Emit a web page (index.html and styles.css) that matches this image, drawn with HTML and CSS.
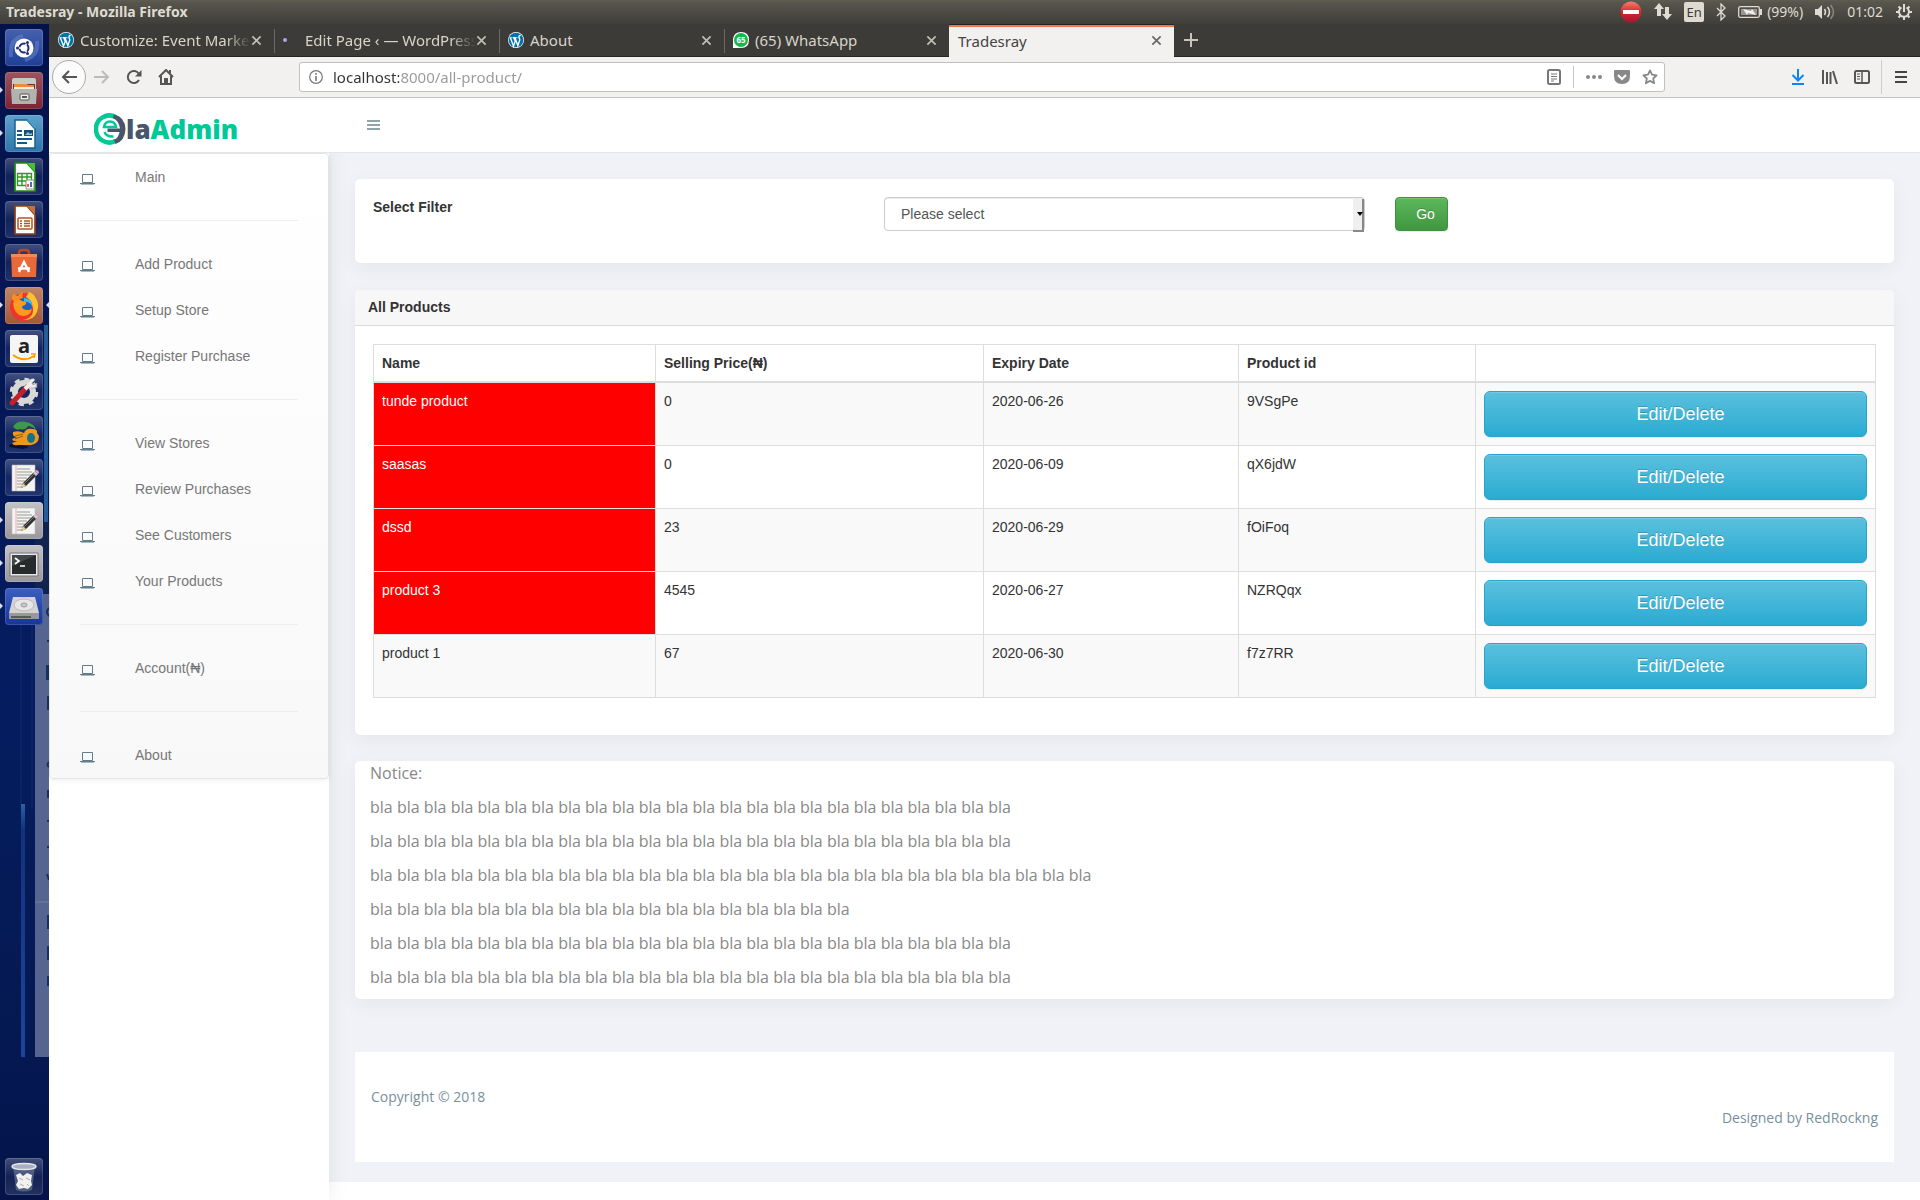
FILE: index.html
```html
<!DOCTYPE html>
<html lang="en">
<head>
<meta charset="utf-8">
<title>Tradesray</title>
<meta name="viewport" content="width=device-width, initial-scale=1">
<link rel="stylesheet" href="styles.css">
</head>
<body>
<svg class="sprite" aria-hidden="true">
  <symbol id="close" viewBox="0 0 12 12"><path d="M1.500 1.500l9 9M10.500 1.500l-9 9" fill="none" stroke="currentColor" stroke-width="1.800"/></symbol>
  <symbol id="wp" viewBox="0 0 24 24"><circle cx="12" cy="12" r="12" fill="#fff"/><circle cx="12" cy="12" r="11" fill="#0073aa"/><path d="M3.500 8.500L8.300 21l2.600-7.200L8.600 8.500M7.500 8.500h4M10.500 8.500L14.800 20.500l2.800-8.500c.4-2-1.600-3-1.200-5 .2-1.400 1.500-2 2.500-1.600" fill="none" stroke="#fff" stroke-width="2"/><path d="M2.500 8.500h4.500M9.500 8.500h5" stroke="#fff" stroke-width="1.200"/></symbol>
  <symbol id="laptop" viewBox="0 0 15 11"><path d="M2.500 .5h10v8h-10z" fill="none" stroke="#607d8b"/><path d="M0 9h15v1H0z" fill="#607d8b"/><path d="M1 10h13v1H1z" fill="#a9bac3"/></symbol>
  <symbol id="gedit" viewBox="0 0 30 30"><path d="M3 2h23v26H3z" fill="#f4f4f2" stroke="#bbb" stroke-width=".6"/><path d="M7 2v26" stroke="#e99" stroke-width=".8"/><path d="M8 6h13M8 9h15M8 12h14M8 15h10M8 18h8M8 21h6M8 24h6" stroke="#999" stroke-width="1"/><path d="M12 25l2-5L25 9l3 3-11 11z" fill="#333"/><path d="M12 25l2-5 3 3z" fill="#e8cf8a"/><path d="M15 21L26 10" stroke="#777" stroke-width="1"/><path d="M24 10l2-2 3 3-2 2z" fill="#ccc"/><path d="M26 8l1-1q3 0 3 3l-1 1z" fill="#e29ad0"/></symbol>
</svg>

<header class="panel">
  <span class="panel-title">Tradesray - Mozilla Firefox</span>
  <div class="tray">
    <svg width="22" height="22" viewBox="0 0 22 22"><defs><linearGradient id="stop" x2="0" y2="1"><stop offset="0" stop-color="#f0806a"/><stop offset=".5" stop-color="#d8262c"/><stop offset="1" stop-color="#a31636"/></linearGradient></defs><circle cx="11" cy="11" r="10.500" fill="url(#stop)"/><path d="M3 9h16v4H3z" fill="#fff"/></svg>
    <svg width="18" height="18" viewBox="0 0 18 18" fill="#dfdbd2"><path d="M5 0l5 6H7v7H3V6H0zM13 17l-5-6h3V4h4v7h3z"/></svg>
    <span class="lang">En</span>
    <svg width="10" height="18" viewBox="0 0 10 18"><path d="M1 5l8 8-4 4V1l4 4-8 8" fill="none" stroke="#dfdbd2" stroke-width="1.300"/></svg>
    <span class="battery"><svg width="24" height="14" viewBox="0 0 24 14"><rect x=".7" y="1.700" width="20.600" height="10.600" rx="1.500" fill="none" stroke="#dfdbd2" stroke-width="1.300"/><path d="M3 4h16v6H3z" fill="#98968f"/><path d="M22 4h2v6h-2z" fill="#dfdbd2"/><path d="M5 4l8 2 1-2 4 6-8-2-1 2z" fill="#eee"/></svg>(99%)</span>
    <svg width="20" height="18" viewBox="0 0 20 18"><path d="M0 6h3l4-4v14l-4-4H0z" fill="#dfdbd2"/><path d="M9.500 6q2 3 0 6M12.500 4q4 5 0 10" fill="none" stroke="#dfdbd2" stroke-width="1.500"/><path d="M15.500 2q6 7 0 14" fill="none" stroke="#8a8780" stroke-width="1.500"/></svg>
    <span>01:02</span>
    <svg width="18" height="18" viewBox="0 0 18 18" fill="none" stroke="#dfdbd2"><path d="M6.500 4.500a5 5 0 1 0 5 0" stroke-width="2"/><path d="M9 1v8" stroke-width="2"/><path d="M3.500 3.500l2 2M14.500 3.500l-2 2M1 9h3M17 9h-3M3.500 14.500l2-2M14.500 14.500l-2-2M9 17v-3" stroke-width="2"/></svg>
  </div>
</header>

<div class="desktop">
<nav class="launcher" aria-label="Launcher">
  <svg class="wallpaper" width="49" height="1176" viewBox="0 0 49 1176" aria-hidden="true">
    <defs><linearGradient id="streak" x2="0" y2="1"><stop offset="0" stop-color="#2a63a8"/><stop offset=".1" stop-color="#12327c"/><stop offset="1" stop-color="#1a46a0"/></linearGradient></defs>
    <path d="M44 301h4v197h-4z" fill="#265d98"/><path d="M35 498h14v72H35z" fill="#13234f"/>
    <path d="M35 570h14v463H35z" fill="#55658f"/><path d="M35 878h14" stroke="#7080a5"/>
    <path d="M21 780h4v253h-4z" fill="url(#streak)"/><path d="M21 600v180M32 600v185" stroke="#0d2c6c"/>
    <path d="M49 584q-4 4 0 8M47 617h2M47 642h2v13h-2zM48 672v14M49 738q-3 3 0 5M48 766v8M47 797h2M47 823h2M47 850l2 6M48 891v14M48 922v14M48 952v10" fill="none" stroke="#18305f" stroke-width="2"/>
  </svg>
  <button class="tile tile-dash" aria-label="Dash"><svg viewBox="0 0 30 30"><path d="M2 24Q0 6 14 3M28 8q2 14-12 19" fill="none" stroke="#5f7fc4" stroke-width="4" opacity=".6"/><circle cx="15" cy="15" r="9.500" fill="#fff"/><circle cx="15" cy="15" r="4.500" fill="none" stroke="#1f2f73" stroke-width="2"/><path d="M15 15L8 15M15 15l4-7M15 15l4 7" stroke="#fff" stroke-width="1.500"/><circle cx="15" cy="15" r="3" fill="#fff"/><circle cx="8.500" cy="15" r="1.500" fill="#1f2f73"/><circle cx="18.500" cy="9.500" r="1.500" fill="#1f2f73"/><circle cx="18.500" cy="20.500" r="1.500" fill="#1f2f73"/></svg></button>
  <button class="tile tile-files running" aria-label="Files"><svg viewBox="0 0 30 30"><path d="M3 4q0-2 2-2h20q2 0 2 2v24H3z" fill="#c9c9c5"/><path d="M4 8h22v5H4z" fill="#5a3a2a"/><path d="M5 8h13l1 1h6v4H5z" fill="#f08a3a"/><path d="M5 11h20v2H5z" fill="#fff0d8"/><path d="M2 13h26l-1 15H3z" fill="#b2b2ae"/><rect x="11" y="18" width="9" height="6" rx="1" fill="#eee" stroke="#555"/><path d="M13 20h5v2h-5z" fill="#555"/></svg></button>
  <button class="tile tile-writer running" aria-label="Writer"><svg viewBox="0 0 30 30"><path d="M6 1h12l8 9v19H6z" fill="#fff" stroke="#17608f" stroke-width="1.500"/><path d="M18 1h8v9z" fill="#4b9cc8"/><path d="M8 12h5M8 16h5M8 20h15M8 24h10" stroke="#125a8a" stroke-width="2"/><path d="M15 11h9v6h-9z" fill="#174f7a"/><path d="M16 16l3-3 2 2 2-1v2z" fill="#8cc"/></svg></button>
  <button class="tile" aria-label="Calc"><svg viewBox="0 0 30 30"><path d="M6 1h12l8 9v19H6z" fill="#fff" stroke="#1e8a10" stroke-width="1.700"/><path d="M18 1h8v9z" fill="#43c330"/><path d="M8.500 11.500h14v12h-14zM8 15h15M8 19h15M13 11v13M18 11v13" fill="none" stroke="#2d9a1d" stroke-width="1.400"/><path d="M17 18h8v9h-8z" fill="#fff" stroke="#888"/><path d="M19 25v-3" stroke="#e63" stroke-width="2"/><path d="M22 25v-5" stroke="#37b" stroke-width="2"/></svg></button>
  <button class="tile" aria-label="Impress"><svg viewBox="0 0 30 30"><path d="M6 1h12l8 9v19H6z" fill="#fff" stroke="#8f3f14" stroke-width="1.700"/><path d="M18 1h8v9z" fill="#c8703a"/><rect x="9" y="13" width="14" height="11" rx="1" fill="#fff" stroke="#b4541c" stroke-width="1.500"/><path d="M11 16h2M15 16h6M11 18.500h2M15 18.500h6M11 21h2M15 21h6" stroke="#b4541c" stroke-width="1.500"/></svg></button>
  <button class="tile" aria-label="Ubuntu Software"><svg viewBox="0 0 30 30"><path d="M10 9V5q0-3 3-3h4q3 0 3 3v4" fill="none" stroke="#b8482a" stroke-width="2.500"/><path d="M2 6h26l-1 23H3z" fill="#e96a38"/><path d="M2 6h26v3H2z" fill="#f58a50"/><path d="M10 24l5-10 5 10M9 20.500h12" fill="none" stroke="#fff" stroke-width="2.500"/></svg></button>
  <button class="tile tile-firefox running active" aria-label="Firefox"><svg viewBox="0 0 30 30"><circle cx="15" cy="16" r="14" fill="#f0342c"/><path d="M26 6q5 6 2 15-4 9-14 8 11-2 10-12Q23 9 17 6L20 1q5 2 6 5z" fill="#ffc22e"/><path d="M3 8q0-4 2-6 1 3 4 3 2-4 5-4-1 6 0 7l-8 4z" fill="#ff8a1e"/><circle cx="15" cy="15" r="8" fill="#2263b8"/><path d="M15 7q8 0 8 8-3-5-8-4z" fill="#37bdf0"/><path d="M4 12q5-6 9-2l4 1q1 3-4 4 0 4 5 4 4 0 5-2-1 8-9 8-9-1-10-13z" fill="#ff9a1f"/></svg></button>
  <button class="tile" aria-label="Amazon"><svg viewBox="0 0 30 30"><rect x="1" y="1" width="28" height="28" rx="2" fill="#f5f5f5"/><path d="M4 21q11 8 21 1" fill="none" stroke="#f90" stroke-width="2"/><path d="M22 20l4 0-1 4" fill="none" stroke="#f90" stroke-width="1.500"/><text x="15" y="19" text-anchor="middle" class="amazon">a</text></svg></button>
  <button class="tile" aria-label="System Settings"><svg viewBox="0 0 30 30"><circle cx="15" cy="15" r="9" fill="none" stroke="#d8d8d5" stroke-width="6"/><circle cx="15" cy="15" r="12.500" fill="none" stroke="#d8d8d5" stroke-width="3.500" stroke-dasharray="5 4.820"/><path d="M3 26L18 10" stroke="#c4202a" stroke-width="5" stroke-linecap="round"/><path d="M16 12l6-6" stroke="#eee" stroke-width="4"/><path d="M20 3q5-3 6 0l-3 3 1 2 4-2q0 6-6 5" fill="#eee" stroke="#888" stroke-width=".6"/></svg></button>
  <button class="tile" aria-label="Media"><svg viewBox="0 0 30 30"><path d="M0 27q0-5 8-3l12 3-6 2z" fill="#071235"/><path d="M4 7Q8 0 17 2q8 1 10 8-4-4-8-4-3 5-8 3-3 2-7-2z" fill="#3d9b45"/><path d="M4 12q6-2 11 1 2-5 8-4 6 0 5 4l2 3q0 8-8 9H9q-5 1-6-2l6-2q-5 1-6-2l5-2q-5 0-4-5z" fill="#ed981f"/><path d="M6 16l8-2M6 19l8-3" stroke="#9a5a10"/><ellipse cx="22" cy="18" rx="4" ry="5" fill="#197281"/></svg></button>
  <button class="tile" aria-label="Text Editor"><svg><use href="#gedit"/></svg></button>
  <button class="tile tile-grey running" aria-label="Text Editor"><svg><use href="#gedit"/></svg></button>
  <button class="tile tile-grey running" aria-label="Terminal"><svg viewBox="0 0 30 30"><path d="M1 4h28v23H1z" fill="#e8e8e8" stroke="#777"/><path d="M3 6h24v19H3z" fill="#272b2b"/><path d="M3 6h24L3 17z" fill="#41474a"/><path d="M6 9l4 3-4 3M11 17h5" fill="none" stroke="#fff" stroke-width="1.700"/></svg></button>
  <button class="tile tile-disk running" aria-label="Disk"><svg viewBox="0 0 30 30"><path d="M4 5h22l4 16H0z" fill="#d4d4d4"/><path d="M0 21h30v6H0z" fill="#999"/><ellipse cx="15" cy="13" rx="10" ry="6" fill="#e6e6e6" stroke="#bbb"/><ellipse cx="15" cy="13" rx="3" ry="2" fill="#ccc" stroke="#999"/><path d="M2 25h20" stroke="#444" stroke-width="1.500"/></svg></button>
  <button class="tile tile-trash" aria-label="Trash"><svg viewBox="0 0 30 30"><path d="M4 4h22l-3 24q-8 3-16 0z" fill="#8d96ae" opacity=".45"/><ellipse cx="15" cy="4.500" rx="12" ry="3" fill="#a8afc0" stroke="#e4e6ea" stroke-width="1.500"/><path d="M7 13l4-2 3 3 4-3 5 2-1 6 1 4-4 4-4-1-5 1-3-4 2-4z" fill="#f1f1ef"/><path d="M10 16l4 2M17 16l4 2M11 22l4 2M18 22l2 2" stroke="#aaa"/></svg></button>
</nav>

<div class="browser">
  <div class="tabs">
    <button class="tab"><svg class="favicon"><use href="#wp"/></svg><span class="tab-label fade">Customize: Event Marke</span><svg class="tab-close"><use href="#close"/></svg></button>
    <button class="tab"><span class="favicon loading"></span><span class="tab-label fade">Edit Page ‹ — WordPress</span><svg class="tab-close"><use href="#close"/></svg></button>
    <button class="tab"><svg class="favicon"><use href="#wp"/></svg><span class="tab-label">About</span><svg class="tab-close"><use href="#close"/></svg></button>
    <button class="tab"><svg class="favicon" viewBox="0 0 16 16"><path d="M0 16V7Q1 0 8 0q8 0 8 8t-8 8z" fill="#fff"/><circle cx="8" cy="8" r="7" fill="#16b84e"/><text x="8" y="11" text-anchor="middle" class="badge">65</text></svg><span class="tab-label">(65) WhatsApp</span><svg class="tab-close"><use href="#close"/></svg></button>
    <button class="tab tab-active"><span class="tab-label">Tradesray</span><svg class="tab-close"><use href="#close"/></svg></button>
    <button class="new-tab" aria-label="New tab"><svg width="14" height="14" viewBox="0 0 14 14"><path d="M7 0v14M0 7h14" stroke="#c9c5bb" stroke-width="2"/></svg></button>
  </div>
  <div class="toolbar">
    <div class="nav-buttons">
      <button class="back" aria-label="Back"><svg width="16" height="14" viewBox="0 0 16 14"><path d="M16 7H2M8 1L2 7l6 6" fill="none" stroke="#555" stroke-width="2"/></svg></button>
      <button aria-label="Forward"><svg width="16" height="14" viewBox="0 0 16 14"><path d="M0 7h14M8 1l6 6-6 6" fill="none" stroke="#bbb" stroke-width="2"/></svg></button>
      <button aria-label="Reload"><svg width="16" height="16" viewBox="0 0 16 16"><path d="M13 11a6 6 0 1 1 0-6" fill="none" stroke="#555" stroke-width="2"/><path d="M15.500 1v6.500H9z" fill="#555"/></svg></button>
      <button aria-label="Home"><svg width="16" height="16" viewBox="0 0 16 16"><path d="M1 8l7-7 7 7M3 7v8h10V7M12 4V1" fill="none" stroke="#555" stroke-width="2"/><path d="M6 9h4v6H6z" fill="#555"/></svg></button>
    </div>
    <div class="urlbar">
      <svg width="14" height="14" viewBox="0 0 14 14"><circle cx="7" cy="7" r="6.300" fill="none" stroke="#777" stroke-width="1.200"/><path d="M7 6v5M7 3v1.700" stroke="#777" stroke-width="1.600"/></svg>
      <input class="url" type="text" aria-label="Address" value="localhost:8000/all-product/">
      <svg width="14" height="16" viewBox="0 0 14 16"><rect x="1" y="1" width="12" height="14" rx="1.500" fill="none" stroke="#777" stroke-width="2"/><path d="M4 5h6M4 7.500h6M4 10h6M4 12h3" stroke="#777"/></svg>
      <span class="url-sep"></span>
      <svg width="16" height="16" viewBox="0 0 16 16" fill="#888"><circle cx="2" cy="8" r="2"/><circle cx="8" cy="8" r="2"/><circle cx="14" cy="8" r="2"/></svg>
      <svg width="16" height="14" viewBox="0 0 16 14"><path d="M1 0h14q1 0 1 1v5q0 8-8 8T0 6V1q0-1 1-1z" fill="#888"/><path d="M4 5l4 4 4-4" fill="none" stroke="#fff" stroke-width="2"/></svg>
      <svg width="16" height="16" viewBox="0 0 16 16"><path d="M8 1.500l2 4.200 4.600.6-3.400 3.200.9 4.700L8 11.900l-4.100 2.300.9-4.700L1.400 6.300 6 5.700z" fill="none" stroke="#888" stroke-width="1.800" stroke-linejoin="round"/></svg>
    </div>
    <div class="tool-buttons">
      <button aria-label="Downloads"><svg width="14" height="16" viewBox="0 0 14 16"><path d="M7 0v11M1.500 6L7 11.500 12.500 6M1 15h12" fill="none" stroke="#0a84ff" stroke-width="2"/></svg></button>
      <button aria-label="Library"><svg width="16" height="14" viewBox="0 0 16 14"><path d="M1 0v14M5 2v12M8.500 2v12M11 1l4 13" fill="none" stroke="#555" stroke-width="2"/></svg></button>
      <button aria-label="Sidebars"><svg width="16" height="14" viewBox="0 0 16 14"><rect x="1" y="1" width="14" height="12" rx="1.500" fill="none" stroke="#555" stroke-width="2"/><path d="M8 1v12" stroke="#555" stroke-width="1.500"/><path d="M3 4h3M3 6.500h3M3 9h3" stroke="#555"/></svg></button>
      <button class="menu" aria-label="Menu"><svg width="12" height="12" viewBox="0 0 12 12"><path d="M0 1h12M0 6h12M0 11h12" stroke="#444" stroke-width="2"/></svg></button>
    </div>
  </div>

  <div class="site">
    <header class="site-header">
      <a class="logo" href="#"><svg width="32" height="32" viewBox="0 0 32 32"><path d="M22 4.200A13.500 13.500 0 1 0 22 27.800" fill="none" stroke="#00c896" stroke-width="4.500"/><path d="M20 1.500Q31 4 31.500 16 31 28 21.500 31L20 27Q25 24 25.500 19H13.500v-3.500H26Q25 8 19 5z" fill="#47566b"/><path d="M22 14H10q1-5.500 6-5.500T22 14zM10.500 19q2 5 9 4.500" fill="none" stroke="#00c896" stroke-width="2.500"/></svg><span>la<b>Admin</b></span></a>
      <button class="burger" aria-label="Toggle menu"><svg width="13" height="10" viewBox="0 0 13 10"><path d="M0 1h13M0 5h13M0 9h13" stroke="#90a4ae" stroke-width="2"/></svg></button>
    </header>
    <div class="site-body">
      <aside class="sidebar">
        <nav class="side-menu">
          <a href="#"><svg><use href="#laptop"/></svg>Main</a>
          <hr>
          <a href="#"><svg><use href="#laptop"/></svg>Add Product</a>
          <a href="#"><svg><use href="#laptop"/></svg>Setup Store</a>
          <a href="#"><svg><use href="#laptop"/></svg>Register Purchase</a>
          <hr>
          <a href="#"><svg><use href="#laptop"/></svg>View Stores</a>
          <a href="#"><svg><use href="#laptop"/></svg>Review Purchases</a>
          <a href="#"><svg><use href="#laptop"/></svg>See Customers</a>
          <a href="#"><svg><use href="#laptop"/></svg>Your Products</a>
          <hr>
          <a href="#"><svg><use href="#laptop"/></svg>Account(₦)</a>
          <hr>
          <a href="#"><svg><use href="#laptop"/></svg>About</a>
        </nav>
      </aside>
      <main class="content">
        <form class="card filter">
          <label for="filter">Select Filter</label>
          <div class="select"><select id="filter"><option>Please select</option></select></div>
          <div><button class="btn btn-go" type="button">Go</button></div>
        </form>

        <section class="card">
          <h2 class="card-header">All Products</h2>
          <div class="card-body">
            <table class="products">
              <colgroup><col class="c-name"><col class="c-price"><col class="c-date"><col class="c-id"><col></colgroup>
              <thead><tr><th>Name</th><th>Selling Price(₦)</th><th>Expiry Date</th><th>Product id</th><th></th></tr></thead>
              <tbody>
                <tr><td class="expired">tunde product</td><td>0</td><td>2020-06-26</td><td>9VSgPe</td><td><button class="btn btn-edit">Edit/Delete</button></td></tr>
                <tr><td class="expired">saasas</td><td>0</td><td>2020-06-09</td><td>qX6jdW</td><td><button class="btn btn-edit">Edit/Delete</button></td></tr>
                <tr><td class="expired">dssd</td><td>23</td><td>2020-06-29</td><td>fOiFoq</td><td><button class="btn btn-edit">Edit/Delete</button></td></tr>
                <tr><td class="expired">product 3</td><td>4545</td><td>2020-06-27</td><td>NZRQqx</td><td><button class="btn btn-edit">Edit/Delete</button></td></tr>
                <tr><td>product 1</td><td>67</td><td>2020-06-30</td><td>f7z7RR</td><td><button class="btn btn-edit">Edit/Delete</button></td></tr>
              </tbody>
            </table>
          </div>
        </section>

        <section class="card notice">
          <p>Notice:</p>
          <p>bla bla bla bla bla bla bla bla bla bla bla bla bla bla bla bla bla bla bla bla bla bla bla bla</p>
          <p>bla bla bla bla bla bla bla bla bla bla bla bla bla bla bla bla bla bla bla bla bla bla bla bla</p>
          <p>bla bla bla bla bla bla bla bla bla bla bla bla bla bla bla bla bla bla bla bla bla bla bla bla bla bla bla</p>
          <p>bla bla bla bla bla bla bla bla bla bla bla bla bla bla bla bla bla bla</p>
          <p>bla bla bla bla bla bla bla bla bla bla bla bla bla bla bla bla bla bla bla bla bla bla bla bla</p>
          <p>bla bla bla bla bla bla bla bla bla bla bla bla bla bla bla bla bla bla bla bla bla bla bla bla</p>
        </section>

        <footer class="site-footer">
          <div>Copyright © 2018</div>
          <div class="credit">Designed by RedRockng</div>
        </footer>
      </main>
    </div>
  </div>
</div>
</div>
</body>
</html>
```
FILE: styles.css
```css
* { box-sizing: border-box; }
body {
  margin: 0;
  min-height: 100vh;
  display: flex;
  flex-direction: column;
  font: 14px/20px "Liberation Sans", Arial, sans-serif;
  color: #333;
  background: #fff;
}
button, input, select { font: inherit; color: inherit; margin: 0; }
button { border: 0; padding: 0; background: none; }
svg { display: block; flex: none; }
a { text-decoration: none; color: inherit; }
.sprite { position: absolute; width: 0; height: 0; }

/* Desktop panel */
.panel {
  height: 24px;
  display: flex;
  align-items: center;
  justify-content: space-between;
  padding: 0 6px;
  background: linear-gradient(#5f5d52, #57554c 12%, #3f3e39);
  color: #dfdbd2;
  font: 14px/24px "Noto Sans", "Open Sans", sans-serif;
}
.panel-title { font-weight: bold; }
.tray { display: flex; align-items: center; gap: 12px; padding-right: 1px; }
.lang { width: 20px; height: 20px; border-radius: 2px; background: #dfdbd2; color: #3c3b37; font-size: 13px; line-height: 20px; text-align: center; }
.battery { display: flex; align-items: center; gap: 5px; }

.desktop { flex: 1; display: flex; }

/* Launcher */
.launcher {
  position: relative;
  flex: none;
  width: 49px;
  padding: 5px;
  display: flex;
  flex-direction: column;
  gap: 6px;
  overflow: hidden;
  background: linear-gradient(#03124a, #04195a 40%, #051d60 55%, #051a55 80%, #04144a);
}
.wallpaper { position: absolute; left: 0; top: 0; }
.tile {
  position: relative;
  width: 38px;
  height: 37px;
  display: grid;
  place-items: center;
  border-radius: 4px;
  background: linear-gradient(rgba(255,255,255,.25), rgba(255,255,255,.06) 50%, rgba(255,255,255,.12));
  box-shadow: inset 0 0 0 1px rgba(255,255,255,.15);
}
.tile svg { width: 30px; height: 30px; overflow: visible; }
.tile-dash { background: linear-gradient(#4560ad, #1f3f97); }
.tile-files { background: linear-gradient(#9a5560, #7a2436); }
.tile-writer { background: linear-gradient(#5fa0cc, #2e76ab); }
.tile-firefox { background: linear-gradient(#c08566, #a4583a); }
.tile-grey { background: linear-gradient(#c4c2c4, #9a989c); }
.tile-disk { background: linear-gradient(#3c5fc0, #16369a); }
.tile-trash { margin-top: auto; }
.running::before, .active::after {
  content: "";
  position: absolute;
  top: 15px;
  border: 3px solid transparent;
}
.running::before { left: -5px; border-left-color: #dde; border-right: 0; }
.active::after { right: -6px; border-right-color: #dde; border-left: 0; }
.amazon { font: bold 20px "Open Sans", sans-serif; fill: #222; }

/* Browser chrome */
.browser { flex: 1; min-width: 0; display: flex; flex-direction: column; font-family: "Noto Sans", "Open Sans", sans-serif; }
.tabs { height: 33px; display: flex; background: #3c3b37; border-bottom: 1px solid #252422; }
.tab {
  position: relative;
  width: 225px;
  display: flex;
  align-items: center;
  gap: 6px;
  padding: 0 12px 0 9px;
  color: #d8d4ca;
  font-size: 15px;
  text-align: left;
}
.tab + .tab::before { content: ""; position: absolute; left: 0; top: 5px; width: 1px; height: 24px; background: #6a6963; }
.favicon { width: 16px; height: 16px; }
.loading { flex: none; display: grid; align-items: center; }
.loading::before { content: ""; width: 4px; height: 4px; border-radius: 50%; background: #a9a4f0; }
.tab-label { flex: 1; min-width: 0; white-space: nowrap; }
.fade { margin-right: -6px; -webkit-mask-image: linear-gradient(90deg, #000 85%, transparent); mask-image: linear-gradient(90deg, #000 85%, transparent); }
.tab-close { width: 11px; height: 11px; color: #c3bfb5; }
.tab-active { height: 33px; background: #f2f1f0; box-shadow: inset 0 1px #252422, inset 0 3px #f07746; color: #444; }
.tab + .tab-active::before { display: none; }
.tab-active .tab-close { color: #666; }
.new-tab { width: 33px; display: grid; place-items: center; }
.badge { font: bold 8px "Noto Sans", sans-serif; fill: #fff; }

.toolbar {
  height: 41px;
  display: flex;
  align-items: center;
  background: #f2f1f0;
  border-bottom: 1px solid #c4c2c0;
}
.toolbar button { width: 32px; height: 34px; display: grid; place-items: center; }
.nav-buttons { width: 250px; display: flex; padding-left: 3px; }
.toolbar .back { width: 34px; border: 1px solid #aaa; border-radius: 50%; background: #fbfbfb; }
.urlbar {
  flex: 1;
  height: 30px;
  display: flex;
  align-items: center;
  gap: 12px;
  padding: 0 6px 0 9px;
  background: #fff;
  border: 1px solid #c2c0bd;
  border-radius: 3px;
}
.url {
  flex: 1;
  min-width: 0;
  height: 28px;
  border: 0;
  outline: 0;
  padding: 0;
  margin-left: -2px;
  font-size: 15px;
  background: linear-gradient(90deg, #333 66px, #999 66px);
  -webkit-background-clip: text;
  background-clip: text;
  -webkit-text-fill-color: transparent;
}
.url-sep { width: 1px; height: 22px; background: #c8c8c8; }
.tool-buttons { width: 255px; display: flex; justify-content: flex-end; }
.toolbar .menu { width: 39px; margin-left: 3px; border-left: 1px solid #cfcdca; }

/* Site */
.site { flex: 1; display: flex; flex-direction: column; font-family: "Liberation Sans", Arial, sans-serif; }
.site-header { height: 55px; display: flex; align-items: center; border-bottom: 1px solid #e6e6ea; }
.logo { width: 318px; display: flex; align-items: center; padding: 7px 0 0 45px; color: #47566b; font: 800 26px/32px "Open Sans", sans-serif; }
.logo b { color: #00c896; font-weight: 800; }
.site-body { flex: 1; display: flex; align-items: flex-start; }
.sidebar { position: relative; align-self: stretch; flex: none; width: 280px; background: #fff; box-shadow: 0 0 20px rgba(0,0,0,.08); clip-path: inset(0 -20px 0 0); }
.side-menu {
  border: 1px solid #e4e4e4;
  border-radius: 4px;
  background: linear-gradient(#fff, #f8f8f8);
  box-shadow: 0 1px 5px rgba(0,0,0,.075);
}
.side-menu a { height: 46px; display: flex; align-items: center; gap: 40px; padding-left: 30px; color: #777; }
.side-menu svg { width: 15px; height: 11px; margin-top: 4px; }
.side-menu hr { margin: 20px 30px; border: 0; border-top: 1px solid #eee; }

.content { flex: 1; min-width: 0; padding: 26px 26px 20px; background: #f1f2f7; }
.card { margin: 0 0 26px; border-radius: 5px; background: #fff; box-shadow: 0 5px 20px rgba(0,0,0,.05); }
.filter { display: grid; grid-template-columns: repeat(3, 1fr); column-gap: 30px; margin-bottom: 27px; padding: 18px 18px 32px; }
.filter label { font-weight: bold; }
.select { position: relative; }
.select select {
  width: 100%;
  height: 34px;
  padding: 0 16px;
  border: 1px solid #ccc;
  border-radius: 4px;
  background: #fff;
  color: #555;
  appearance: none;
  box-shadow: inset 0 1px 1px rgba(0,0,0,.075);
}
.select::before {
  content: "";
  position: absolute;
  right: 1px;
  top: 2px;
  width: 9px;
  height: 31px;
  background: #efefef;
  border-right: 2px solid #888;
  border-bottom: 2px solid #888;
}
.select::after { content: ""; position: absolute; right: 2px; top: 15px; border: 3px solid transparent; border-top: 4px solid #000; border-bottom: 0; }
.btn { color: #fff; text-shadow: 0 -1px 0 rgba(0,0,0,.2); box-shadow: inset 0 1px 0 rgba(255,255,255,.15), 0 1px 1px rgba(0,0,0,.075); }
.btn-go { width: 53px; height: 34px; padding-left: 8px; border: 1px solid #3e8f3e; border-radius: 4px; background: linear-gradient(#5cb85c, #419641); }
.btn-edit { display: block; width: 100%; height: 46px; padding-left: 10px; border: 1px solid #28a4c9; border-radius: 6px; background: linear-gradient(#5bc0de, #2aabd2); font-size: 18px; }

.card-header { margin: 0; padding: 7px 13px 8px; border-bottom: 1px solid #d9d9d9; border-radius: 5px 5px 0 0; background: #f7f7f7; font-size: 14px; line-height: 20px; }
.card-body { padding: 18px 18px 37px; }
.products { width: 100%; table-layout: fixed; border-collapse: collapse; }
.products th, .products td { padding: 8px; border: 1px solid #ddd; text-align: left; vertical-align: top; }
.products th { border-bottom-width: 2px; }
.products tbody tr:nth-child(odd) { background: #f9f9f9; }
.products .expired { background: red; color: #fff; }
.c-name { width: 282px; }
.c-price { width: 328px; }
.c-date { width: 255px; }
.c-id { width: 237px; }

.notice { margin-bottom: 53px; padding: 0 15px; font: 16px/24px "Open Sans", sans-serif; color: #888; display: flow-root; }
.notice p { margin: 0 0 10px; }
.site-footer { padding: 34px 16px; background: #fff; color: #78909c; font: 14px/21px "Open Sans", sans-serif; }
.credit { text-align: right; }
```
